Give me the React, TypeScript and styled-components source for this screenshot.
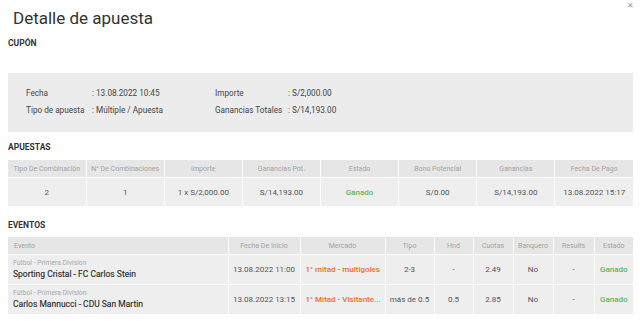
import * as React from 'react'
import styled, { createGlobalStyle } from 'styled-components'

const GlobalStyle = createGlobalStyle`
  html, body {
    margin: 0;
    padding: 0;
    background: #fff;
    font-family: Roboto, "Liberation Sans", sans-serif;
  }
`

const Modal = styled.div`
  position: relative;
  width: 640px;
  height: 321px;
  box-sizing: border-box;
  padding: 0 7px 0 8px;
  overflow: hidden;
  background: #fff;
`

const Title = styled.h1`
  margin: 0;
  padding: 7px 0 0 5px;
  height: 30px;
  box-sizing: border-box;
  font-size: 17px;
  font-weight: 400;
  color: #333;
  line-height: 22px;
`

const Close = styled.span`
  position: absolute;
  top: 1px;
  right: 6px;
  font-size: 8px;
  color: #999;
  line-height: 10px;
`

const SectionTitle = styled.div<{ $top: number }>`
  margin-top: ${(p) => p.$top}px;
  height: 12px;
  font-size: 8.5px;
  font-weight: 700;
  color: #333;
  line-height: 12px;
  text-transform: uppercase;
`

const Coupon = styled.div`
  margin-top: 24px;
  height: 59px;
  background: #ececec;
  box-sizing: border-box;
  padding: 11px 0 0 18px;
  display: grid;
  grid-template-columns: 66px 123px 73px 1fr;
  grid-auto-rows: 17px;
  font-size: 8.2px;
  color: #444;
  align-items: center;
`

const Table = styled.table<{ $top: number }>`
  margin-top: ${(p) => p.$top}px;
  width: 625px;
  table-layout: fixed;
  border-collapse: collapse;
`

const Th = styled.th<{ $align?: string }>`
  height: 17px;
  padding: 0 2px 0 ${(p) => (p.$align === 'left' ? 6 : 2)}px;
  background: #e6e6e6;
  color: #a3a3a3;
  font-size: 7px;
  font-weight: 400;
  text-align: ${(p) => p.$align || 'center'};
  border-right: 1px solid #fff;
  white-space: nowrap;
  overflow: hidden;
  &:last-child { border-right: none; }
`

const Td = styled.td<{ $align?: string; $h?: number }>`
  height: ${(p) => p.$h || 28}px;
  padding: 0 2px 0 ${(p) => (p.$align === 'left' ? 5 : 2)}px;
  background: #eeeeee;
  color: #555;
  font-size: 8px;
  text-align: ${(p) => p.$align || 'center'};
  border-right: 1px solid #fff;
  border-top: 1px solid #fff;
  white-space: nowrap;
  overflow: hidden;
  &:last-child { border-right: none; }
`

const Status = styled.span`
  color: #5cb85c;
  font-weight: 500;
`

const Market = styled.span`
  color: #ee7022;
  font-weight: 500;
`

const Sport = styled.div`
  font-size: 6.8px;
  color: #a8a8a8;
  line-height: 9px;
`

const EventName = styled.div`
  font-size: 8.5px;
  color: #2e2e2e;
  font-weight: 400;
  line-height: 13px;
  -webkit-text-stroke: 0.15px #2e2e2e;
`

const bets = [
  'Tipo De Combinación',
  'N° De Combinaciones',
  'Importe',
  'Ganancias Pot.',
  'Estado',
  'Bono Potencial',
  'Ganancias',
  'Fecha De Pago',
]

const eventCols = [220, 72, 85, 49, 39, 40, 40, 41, 39]
const eventHeads = ['Fecha De Inicio', 'Mercado', 'Tipo', 'Hnd', 'Cuotas', 'Banquero', 'Results', 'Estado']

const events = [
  { name: 'Sporting Cristal - FC Carlos Stein', date: '13.08.2022 11:00', market: '1° mitad - multigoles', tipo: '2-3', hnd: '-', cuota: '2.49' },
  { name: 'Carlos Mannucci - CDU San Martin', date: '13.08.2022 13:15', market: '1° Mitad - Visitante...', tipo: 'más de 0.5', hnd: '0.5', cuota: '2.85' },
]

export default function App() {
  return (
    <Modal>
      <GlobalStyle />
      <Close>✕</Close>
      <Title>Detalle de apuesta</Title>
      <SectionTitle $top={7}>Cupón</SectionTitle>
      <Coupon>
        <span>Fecha</span>
        <span>: 13.08.2022 10:45</span>
        <span>Importe</span>
        <span>: S/2,000.00</span>
        <span>Tipo de apuesta</span>
        <span>: Múltiple / Apuesta</span>
        <span>Ganancias Totales</span>
        <span>: S/14,193.00</span>
      </Coupon>
      <SectionTitle $top={9}>Apuestas</SectionTitle>
      <Table $top={7}>
        <thead>
          <tr>
            {bets.map((b) => (
              <Th key={b}>{b}</Th>
            ))}
          </tr>
        </thead>
        <tbody>
          <tr>
            <Td>2</Td>
            <Td>1</Td>
            <Td>1 x S/2,000.00</Td>
            <Td>S/14,193.00</Td>
            <Td><Status>Ganado</Status></Td>
            <Td>S/0.00</Td>
            <Td>S/14,193.00</Td>
            <Td>13.08.2022 15:17</Td>
          </tr>
        </tbody>
      </Table>
      <SectionTitle $top={13}>Eventos</SectionTitle>
      <Table $top={6}>
        <colgroup>
          {eventCols.map((w, i) => (
            <col key={i} style={{ width: w }} />
          ))}
        </colgroup>
        <thead>
          <tr>
            <Th $align="left">Evento</Th>
            {eventHeads.map((h) => (
              <Th key={h}>{h}</Th>
            ))}
          </tr>
        </thead>
        <tbody>
          {events.map((e) => (
            <tr key={e.name}>
              <Td $align="left" $h={29}>
                <Sport>Fútbol - Primera Division</Sport>
                <EventName>{e.name}</EventName>
              </Td>
              <Td $h={29}>{e.date}</Td>
              <Td $align="left" $h={29}><Market>{e.market}</Market></Td>
              <Td $h={29}>{e.tipo}</Td>
              <Td $h={29}>{e.hnd}</Td>
              <Td $h={29}>{e.cuota}</Td>
              <Td $h={29}>No</Td>
              <Td $h={29}>-</Td>
              <Td $h={29}><Status>Ganado</Status></Td>
            </tr>
          ))}
        </tbody>
      </Table>
    </Modal>
  )
}
